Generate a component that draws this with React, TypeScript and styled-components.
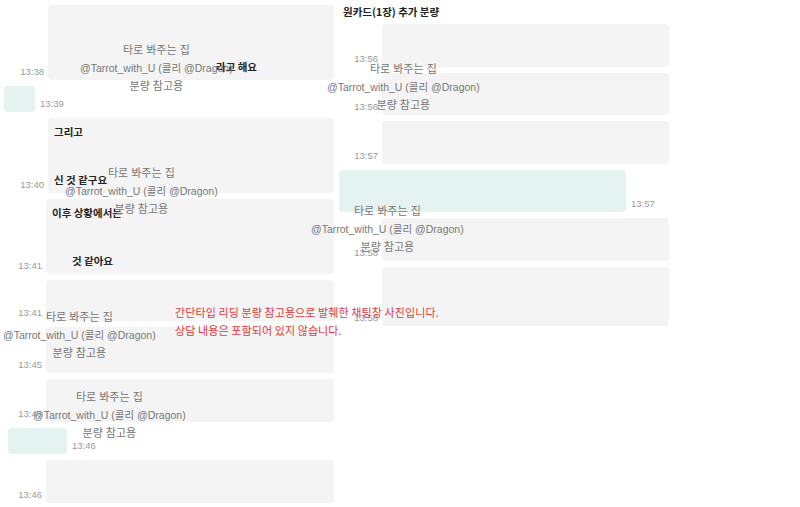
import styled, { createGlobalStyle } from 'styled-components';

const GlobalStyle = createGlobalStyle`
  body {
    margin: 0;
    background: #ffffff;
    font-family: "Noto Sans CJK KR", "Noto Sans", sans-serif;
  }
`;

const Page = styled.div`
  position: relative;
  display: flex;
  width: 800px;
  height: 507px;
  overflow: hidden;
  background: #ffffff;
`;

const LeftColumn = styled.div`
  display: flex;
  flex-direction: column;
  gap: 6px;
  width: 339px;
  padding-top: 5px;
`;

const RightColumn = styled.div`
  display: flex;
  flex-direction: column;
  gap: 6px;
  width: 331px;
  padding-top: 5px;
`;

const ChatTitle = styled.div`
  padding-left: 4px;
  height: 13px;
  font-size: 10.5px;
  font-weight: 700;
  line-height: 13px;
  color: #222;
`;

const Row = styled.div<{ $timeWidth: number }>`
  display: grid;
  grid-template-columns: ${({ $timeWidth }) => $timeWidth}px auto;
  align-items: end;
`;

const MineRow = styled.div<{ $indent: number }>`
  display: flex;
  align-items: flex-end;
  gap: 5px;
  padding-left: ${({ $indent }) => $indent}px;
`;

const Time = styled.span<{ $align?: 'left' | 'right' }>`
  padding-right: 4px;
  margin-bottom: 2px;
  font-family: "Liberation Sans", "Noto Sans", sans-serif;
  font-size: 9.5px;
  line-height: 12px;
  color: #9a9a9a;
  text-align: ${({ $align }) => $align ?? 'right'};
`;

const Bubble = styled.div<{ $w: number; $h: number }>`
  display: flex;
  flex-direction: column;
  justify-content: space-between;
  box-sizing: border-box;
  width: ${({ $w }) => $w}px;
  height: ${({ $h }) => $h}px;
  padding: 7px 6px 6px;
  border-radius: 4px;
  background: #f4f4f4;
`;

const MineBubble = styled.div<{ $w: number; $h: number }>`
  width: ${({ $w }) => $w}px;
  height: ${({ $h }) => $h}px;
  border-radius: 4px;
  background: #e4f3ef;
`;

const Line = styled.span<{ $indent?: number }>`
  padding-left: ${({ $indent }) => $indent ?? 0}px;
  font-size: 10.5px;
  font-weight: 700;
  line-height: 14px;
  color: #262626;
`;

const Watermark = styled.div<{ $x: number; $y: number }>`
  position: absolute;
  left: ${({ $x }) => $x}px;
  top: ${({ $y }) => $y}px;
  display: flex;
  flex-direction: column;
  align-items: center;
  font-family: "Liberation Sans", "Noto Sans CJK KR", sans-serif;
  font-size: 11px;
  line-height: 18px;
  color: #767676;
  white-space: nowrap;
  pointer-events: none;
`;

const Handle = styled.span`
  font-size: 10.5px;
`;

const Notice = styled.div`
  position: absolute;
  left: 175px;
  top: 303px;
  font-size: 11px;
  letter-spacing: 0.1px;
  line-height: 18px;
  color: #e2393f;
  white-space: nowrap;
`;

const marks = [
  { x: 80, y: 41 },
  { x: 65, y: 164 },
  { x: 3, y: 308 },
  { x: 33, y: 388 },
  { x: 327, y: 60 },
  { x: 311, y: 202 },
];

const App = () => (
  <Page>
    <GlobalStyle />
    <LeftColumn>
      <Row $timeWidth={48}>
        <Time>13:38</Time>
        <Bubble $w={286} $h={75}>
          <span />
          <Line $indent={162}>라고 해요</Line>
        </Bubble>
      </Row>
      <MineRow $indent={4}>
        <MineBubble $w={31} $h={26} />
        <Time $align="left">13:39</Time>
      </MineRow>
      <Row $timeWidth={48}>
        <Time>13:40</Time>
        <Bubble $w={286} $h={75}>
          <Line>그리고</Line>
          <Line>신 것 같구요</Line>
        </Bubble>
      </Row>
      <Row $timeWidth={46}>
        <Time>13:41</Time>
        <Bubble $w={288} $h={75}>
          <Line>이후 상황에서는</Line>
          <Line $indent={20}>것 같아요</Line>
        </Bubble>
      </Row>
      <Row $timeWidth={46}>
        <Time>13:41</Time>
        <Bubble $w={288} $h={41} />
      </Row>
      <Row $timeWidth={46}>
        <Time>13:45</Time>
        <Bubble $w={288} $h={46} />
      </Row>
      <Row $timeWidth={46}>
        <Time>13:46</Time>
        <Bubble $w={288} $h={43} />
      </Row>
      <MineRow $indent={8}>
        <MineBubble $w={59} $h={26} />
        <Time $align="left">13:46</Time>
      </MineRow>
      <Row $timeWidth={46}>
        <Time>13:46</Time>
        <Bubble $w={288} $h={43} />
      </Row>
    </LeftColumn>
    <RightColumn>
      <ChatTitle>원카드(1장) 추가 분량</ChatTitle>
      <Row $timeWidth={43}>
        <Time>13:56</Time>
        <Bubble $w={287} $h={43} />
      </Row>
      <Row $timeWidth={43}>
        <Time>13:56</Time>
        <Bubble $w={287} $h={42} />
      </Row>
      <Row $timeWidth={43}>
        <Time>13:57</Time>
        <Bubble $w={287} $h={43} />
      </Row>
      <MineRow $indent={0}>
        <MineBubble $w={287} $h={42} />
        <Time $align="left">13:57</Time>
      </MineRow>
      <Row $timeWidth={43}>
        <Time>13:58</Time>
        <Bubble $w={287} $h={43} />
      </Row>
      <Row $timeWidth={43}>
        <Time>13:58</Time>
        <Bubble $w={287} $h={59} />
      </Row>
    </RightColumn>
    {marks.map((m) => (
      <Watermark key={`${m.x}-${m.y}`} $x={m.x} $y={m.y}>
        <span>타로 봐주는 집</span>
        <Handle>@Tarrot_with_U (콜리 @Dragon)</Handle>
        <span>분량 참고용</span>
      </Watermark>
    ))}
    <Notice>
      간단타입 리딩 분량 참고용으로 발췌한 채팅창 사진입니다.
      <br />
      상담 내용은 포함되어 있지 않습니다.
    </Notice>
  </Page>
);

export default App;
